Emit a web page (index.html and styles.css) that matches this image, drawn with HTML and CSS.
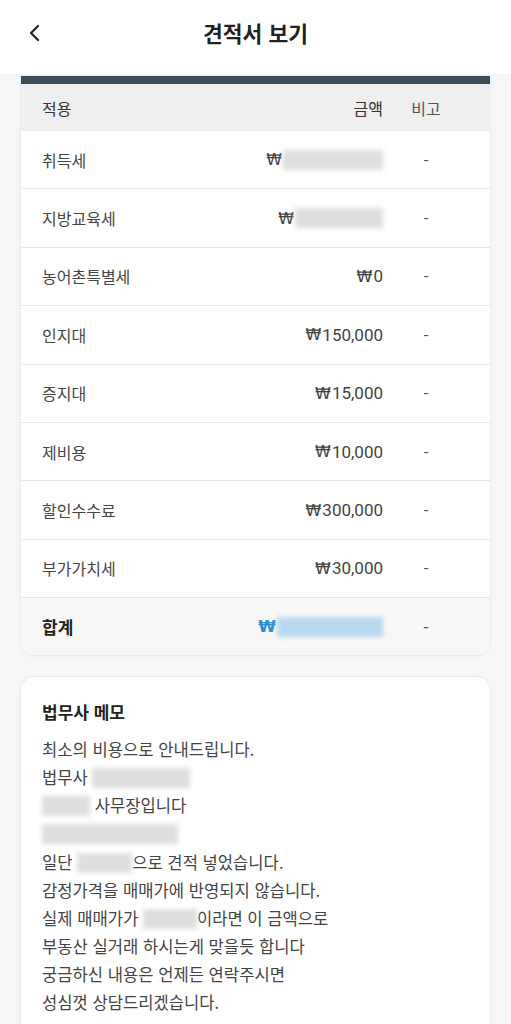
FILE: index.html
```html
<!DOCTYPE html>
<html lang="ko">
<head>
<meta charset="utf-8">
<link rel="stylesheet" href="styles.css">
</head>
<body>
<header class="topbar">
  <svg class="back" width="14" height="18" viewBox="0 0 14 18"><path d="M10 2 L3 9 L10 16" fill="none" stroke="#222" stroke-width="2.2" stroke-linecap="round" stroke-linejoin="round"/></svg>
  <h1 class="title">견적서 보기</h1>
</header>
<main class="page">
  <section class="card table-card">
    <div class="bar"></div>
    <div class="row head"><span class="c-label">적용</span><span class="c-amt kr">금액</span><span class="c-note">비고</span></div>
    <div class="row"><span class="c-label">취득세</span><span class="c-amt"><b class="won">₩</b><i class="blur" style="width:100px"></i></span><span class="c-note">-</span></div>
    <div class="row"><span class="c-label">지방교육세</span><span class="c-amt"><b class="won">₩</b><i class="blur" style="width:88px"></i></span><span class="c-note">-</span></div>
    <div class="row"><span class="c-label">농어촌특별세</span><span class="c-amt"><b class="won">₩</b>0</span><span class="c-note">-</span></div>
    <div class="row"><span class="c-label">인지대</span><span class="c-amt"><b class="won">₩</b>150,000</span><span class="c-note">-</span></div>
    <div class="row"><span class="c-label">증지대</span><span class="c-amt"><b class="won">₩</b>15,000</span><span class="c-note">-</span></div>
    <div class="row"><span class="c-label">제비용</span><span class="c-amt"><b class="won">₩</b>10,000</span><span class="c-note">-</span></div>
    <div class="row"><span class="c-label">할인수수료</span><span class="c-amt"><b class="won">₩</b>300,000</span><span class="c-note">-</span></div>
    <div class="row"><span class="c-label">부가가치세</span><span class="c-amt"><b class="won">₩</b>30,000</span><span class="c-note">-</span></div>
    <div class="row total"><span class="c-label">합계</span><span class="c-amt blue"><b class="won strong">₩</b><i class="blur blue-blur" style="width:106px"></i></span><span class="c-note">-</span></div>
  </section>
  <section class="card memo">
    <h2 class="memo-title">법무사 메모</h2>
    <p class="memo-text">최소의 비용으로 안내드립니다.<br>
    법무사 <i class="blur inline" style="width:98px"></i><br>
    <i class="blur inline" style="width:48px"></i> 사무장입니다<br>
    <i class="blur inline" style="width:136px"></i><br>
    일단 <i class="blur inline" style="width:55px"></i>으로 견적 넣었습니다.<br>
    감정가격을 매매가에 반영되지 않습니다.<br>
    실제 매매가가 <i class="blur inline" style="width:54px"></i>이라면 이 금액으로<br>
    부동산 실거래 하시는게 맞을듯 합니다<br>
    궁금하신 내용은 언제든 연락주시면<br>
    성심껏 상담드리겠습니다.</p>
  </section>
</main>
</body>
</html>
```
FILE: styles.css
```css
* { box-sizing: border-box; }
html, body { margin: 0; padding: 0; }
body {
  background: #f5f6f8;
  font-family: "Noto Sans CJK KR", "Noto Sans", sans-serif;
  color: #333;
  width: 511px;
  overflow: hidden;
}
.topbar {
  height: 74px;
  background: #fff;
  display: flex;
  align-items: center;
  justify-content: center;
  position: relative;
}
.back { position: absolute; left: 28px; top: 24px; }
.title {
  margin: 0;
  font-size: 21.5px;
  font-weight: 700;
  color: #222;
  margin-top: -10px;
}
.page {
  padding: 2px 21px 0;
  display: flex;
  flex-direction: column;
  gap: 22px;
}
.card {
  background: #fff;
  border-radius: 14px;
  box-shadow: 0 0 0 1px #ebecee, 0 1px 3px rgba(0,0,0,0.05);
  overflow: hidden;
}
.table-card { border-radius: 0 0 14px 14px; }
.bar { height: 8px; background: #3e4a5a; }
.row {
  display: grid;
  grid-template-columns: 1fr auto 86px;
  align-items: center;
  height: 58.4px;
  padding-left: 21px;
  padding-right: 21px;
  border-bottom: 1px solid #e6e6e6;
  font-size: 16px;
  color: #444;
}
.row.head {
  height: 47px;
  background: #efefef;
  border-bottom: none;
  color: #333;
}
.row.total {
  background: #f7f7f7;
  border-bottom: none;
  height: 57px;
  font-weight: 700;
  font-size: 17px;
  color: #222;
}
.row.total .c-note { font-weight: 400; }
.c-amt {
  display: flex;
  align-items: center;
  justify-content: flex-end;
  font-family: Roboto, "Noto Sans CJK KR", sans-serif;
  font-size: 17px;
  color: #444;
}
.c-amt.kr { font-family: "Noto Sans CJK KR", sans-serif; font-size: 16px; color: #333; }
.won {
  font-family: "DejaVu Sans", sans-serif;
  font-weight: 400;
  font-size: 16px;
  margin-right: 1px;
}
.won.strong { font-weight: 700; }
.c-note { text-align: center; color: #555; }
.blue { color: #2a8fd0; }
.row.total .blue { color: #2a8fd0; }
.blur {
  display: inline-block;
  height: 20px;
  background: #dedede;
  filter: blur(2.5px);
}
.blue-blur { background: #b6d8ef; }
.blur.inline { vertical-align: -4px; }
.memo { padding: 22px 21px 20px; }
.memo-title {
  margin: 0 0 11px;
  font-size: 17px;
  font-weight: 700;
  color: #222;
}
.memo-text {
  margin: 0;
  font-size: 16.6px;
  line-height: 28.1px;
  color: #444;
}
```
